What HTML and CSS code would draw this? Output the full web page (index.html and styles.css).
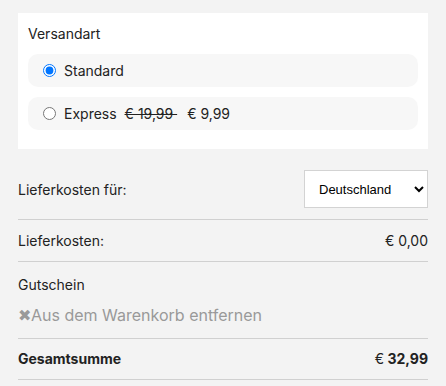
FILE: index.html
```html
<!DOCTYPE html>
<html lang="de">

<head>
    <meta charset="UTF-8">
    <meta name="viewport" content="width=device-width, initial-scale=1.0">
    <title>Warenkorb</title>
    <link rel="stylesheet" href="styles.css">
</head>

<body>
    <div class="shipping-box">
        <p class="box-title">Versandart</p>
        <label class="option">
            <input type="radio" name="shipping" checked>
            <span>Standard</span>
        </label>
        <label class="option">
            <input type="radio" name="shipping">
            <span>Express</span>
            <span class="old-price">€ 19,99&nbsp;</span>
            <span>€ 9,99</span>
        </label>
    </div>

    <div class="totals">
        <div class="row row-select">
            <span>Lieferkosten für:</span>
            <select class="country">
                <option>Deutschland</option>
                <option>Österreich</option>
                <option>Schweiz</option>
            </select>
        </div>
        <div class="row">
            <span>Lieferkosten:</span>
            <span>€ 0,00</span>
        </div>
        <div class="row coupon">
            <span class="coupon-title">Gutschein</span>
            <a class="remove" href="#">✖Aus dem Warenkorb entfernen</a>
        </div>
        <div class="row total">
            <span>Gesamtsumme</span>
            <span><span class="currency">€</span> 32,99</span>
        </div>
    </div>
</body>

</html>
```

FILE: styles.css
```css
body {
    margin: 0;
    padding: 13px 18px;
    font-family: Inter, "Liberation Sans", sans-serif;
    color: #222;
    background-color: #f3f3f3;
}

.shipping-box {
    background: white;
    padding: 11px 10px 9px;
}

.box-title {
    margin: 0 0 10px;
    font-size: 14px;
    line-height: 20px;
}

.option {
    display: flex;
    align-items: center;
    gap: 8px;
    height: 33px;
    padding: 0 15px;
    margin-bottom: 10px;
    background: #f7f7f7;
    border-radius: 10px;
    font-size: 14px;
}

.option input {
    margin: 0;
    width: 13px;
    height: 13px;
}

.old-price {
    text-decoration: line-through;
    padding-right: 2px;
}

.totals {
    margin-top: 11px;
    font-size: 14px;
}

.row {
    display: flex;
    justify-content: space-between;
    align-items: center;
    padding: 10px 0;
    line-height: 21px;
    border-bottom: 1px solid #d0d0d0;
}

.row-select {
    padding: 10px 0 11px;
}

.country {
    width: 124px;
    height: 38px;
    padding: 0 8px 0 10px;
    border: 1px solid #d3d3d3;
    background: white;
    font-family: Arial, "Liberation Sans", sans-serif;
    font-size: 13px;
}

.coupon {
    flex-direction: column;
    align-items: flex-start;
    gap: 10px;
    padding: 12px 0 12px;
}

.coupon-title {
    font-size: 14px;
}

.remove {
    color: #999;
    font-size: 16px;
    text-decoration: none;
}

.total {
    padding: 9px 0 10px;
    font-weight: bold;
}

.currency {
    font-weight: normal;
}
```
